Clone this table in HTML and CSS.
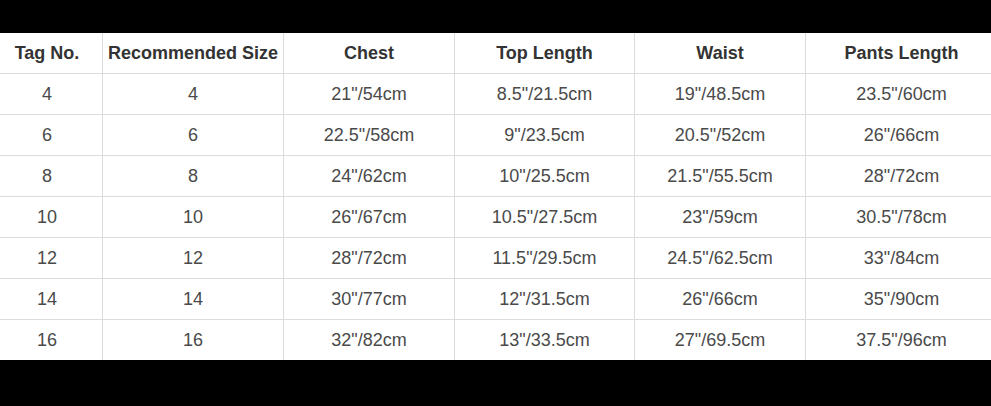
FILE: index.html
```html
<!DOCTYPE html>
<html lang="en">
<head>
<meta charset="utf-8">
<title>Size Chart</title>
<link rel="stylesheet" href="styles.css">
</head>
<body>
<main class="frame">
  <div class="chart" role="table">
    <div class="cell head">Tag No.</div>
    <div class="cell head">Recommended Size</div>
    <div class="cell head">Chest</div>
    <div class="cell head">Top Length</div>
    <div class="cell head">Waist</div>
    <div class="cell head">Pants Length</div>

    <div class="cell">4</div><div class="cell">4</div><div class="cell">21"/54cm</div><div class="cell">8.5"/21.5cm</div><div class="cell">19"/48.5cm</div><div class="cell">23.5"/60cm</div>
    <div class="cell">6</div><div class="cell">6</div><div class="cell">22.5"/58cm</div><div class="cell">9"/23.5cm</div><div class="cell">20.5"/52cm</div><div class="cell">26"/66cm</div>
    <div class="cell">8</div><div class="cell">8</div><div class="cell">24"/62cm</div><div class="cell">10"/25.5cm</div><div class="cell">21.5"/55.5cm</div><div class="cell">28"/72cm</div>
    <div class="cell">10</div><div class="cell">10</div><div class="cell">26"/67cm</div><div class="cell">10.5"/27.5cm</div><div class="cell">23"/59cm</div><div class="cell">30.5"/78cm</div>
    <div class="cell">12</div><div class="cell">12</div><div class="cell">28"/72cm</div><div class="cell">11.5"/29.5cm</div><div class="cell">24.5"/62.5cm</div><div class="cell">33"/84cm</div>
    <div class="cell">14</div><div class="cell">14</div><div class="cell">30"/77cm</div><div class="cell">12"/31.5cm</div><div class="cell">26"/66cm</div><div class="cell">35"/90cm</div>
    <div class="cell">16</div><div class="cell">16</div><div class="cell">32"/82cm</div><div class="cell">13"/33.5cm</div><div class="cell">27"/69.5cm</div><div class="cell">37.5"/96cm</div>
  </div>
</main>
</body>
</html>
```

FILE: styles.css
```css
html, body {
  margin: 0;
  padding: 0;
  background: #000;
  height: 100%;
}

.frame {
  padding-top: 33px;
  overflow: hidden;
}

.chart {
  display: grid;
  grid-template-columns: 110px 180px 170px 179px 170px 1fr;
  grid-auto-rows: 40px;
  gap: 1px;
  margin-left: -8px;
  width: calc(100% + 14px);
  background: #dcdcdc;
  font-family: "Liberation Sans", Arial, sans-serif;
}

.cell {
  background: #fff;
  display: flex;
  align-items: center;
  justify-content: center;
  font-size: 18px;
  color: #4a4a4a;
  white-space: nowrap;
}

.head {
  font-weight: bold;
  color: #333;
}
```
